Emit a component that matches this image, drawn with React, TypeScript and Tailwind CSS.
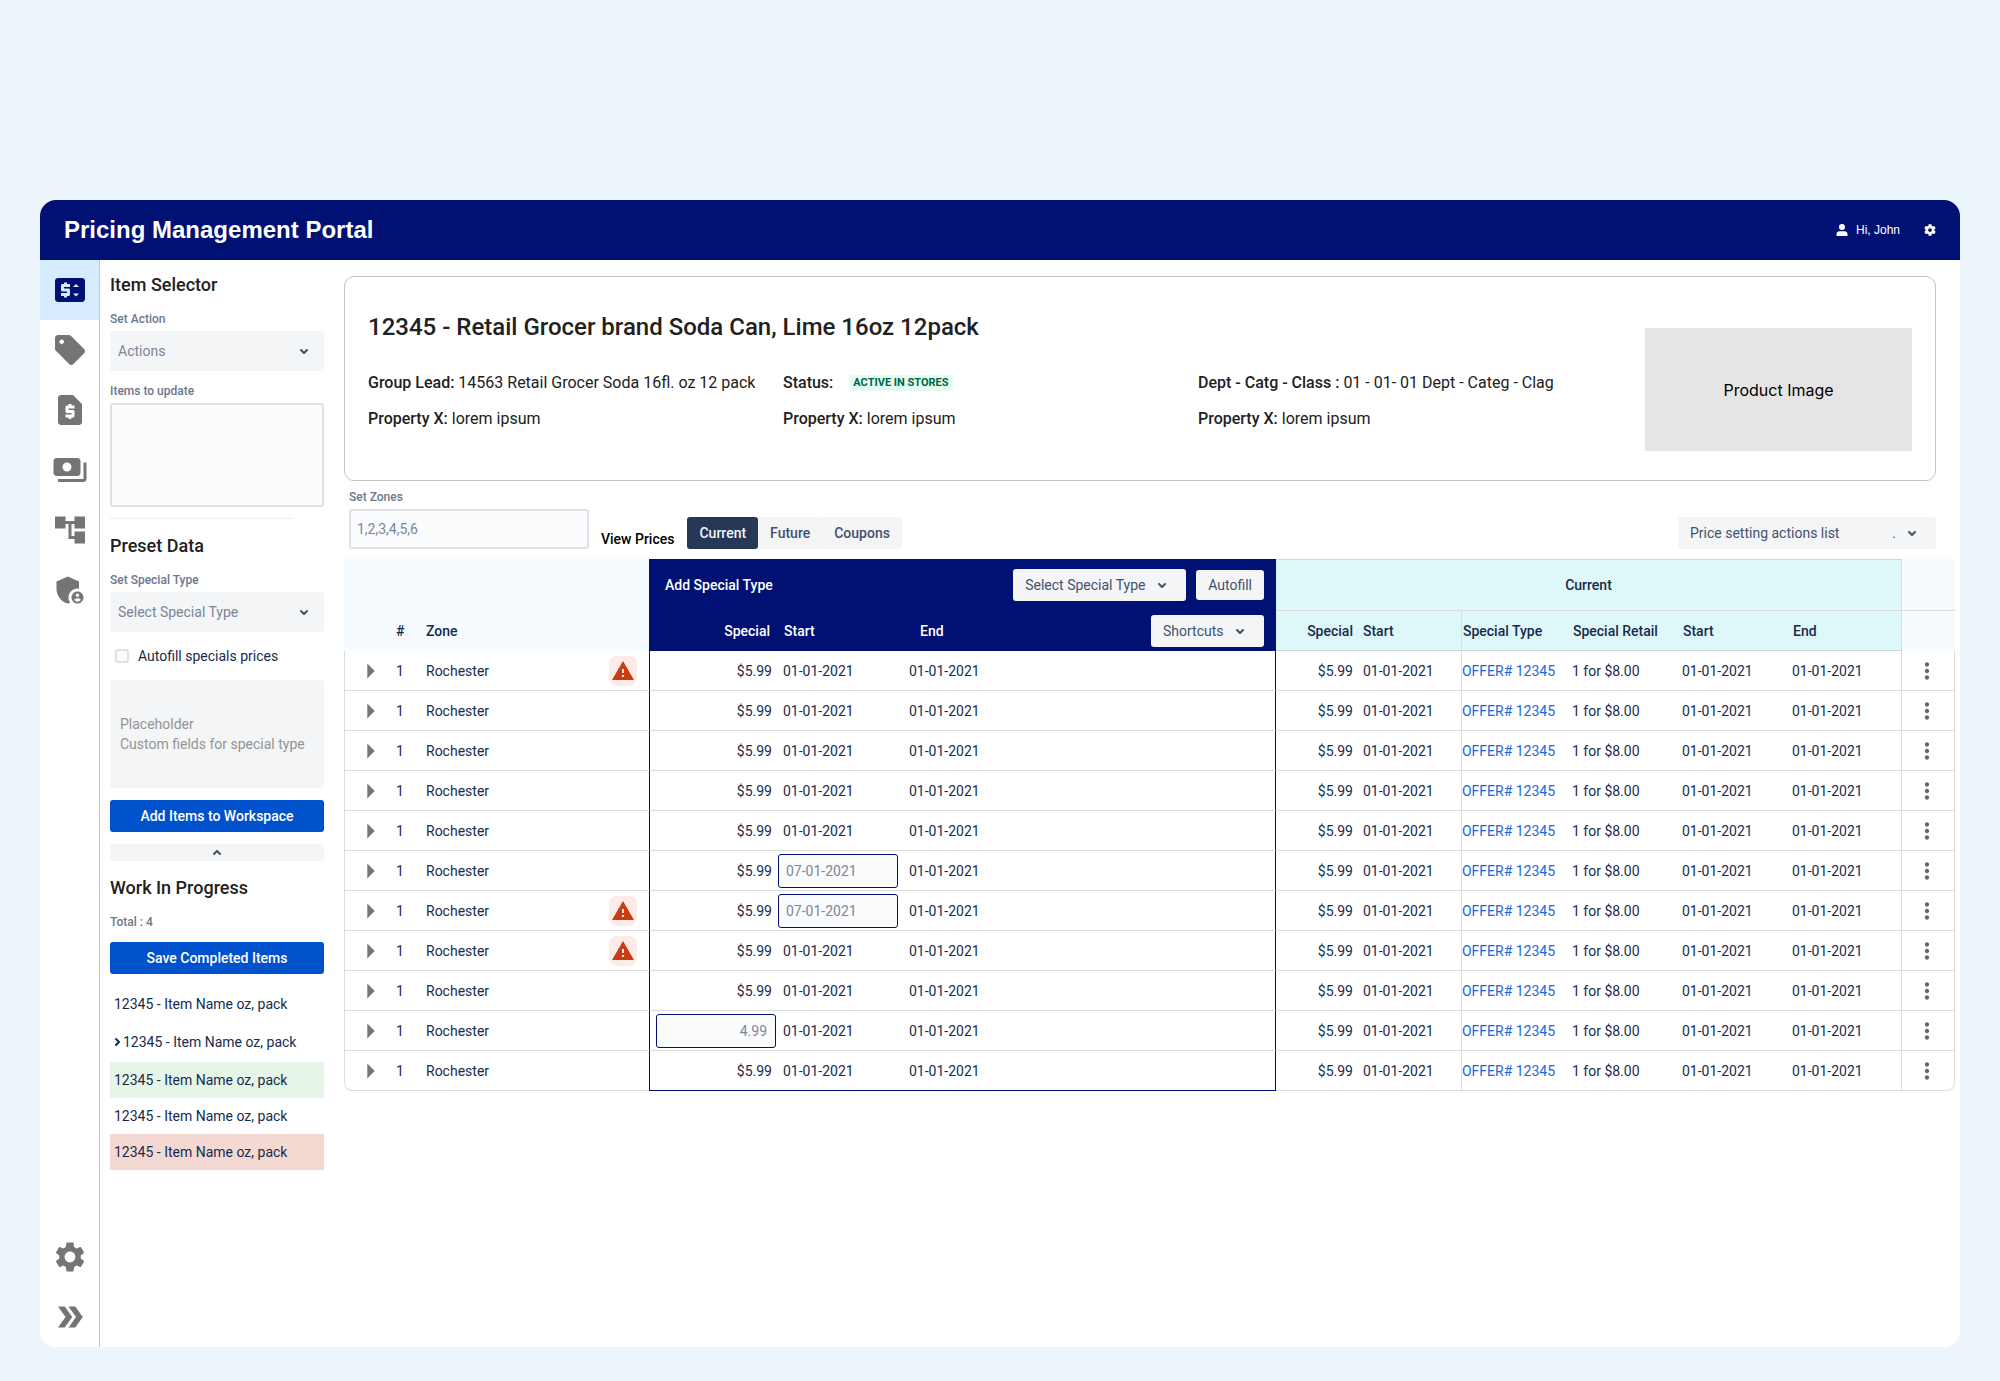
import type { ReactNode } from "react";
import clsx from "clsx";
import {
  MdAccountTree,
  MdAdminPanelSettings,
  MdDoubleArrow,
  MdMoreVert,
  MdPayments,
  MdPriceChange,
  MdRequestPage,
  MdSell,
  MdSettings,
  MdWarning,
} from "react-icons/md";
import { FaCog } from "react-icons/fa";

type Row = {
  zone: string;
  alert?: boolean;
  specialDraft?: string;
  startDraft?: string;
};

const rows: Row[] = [
  { zone: "Rochester", alert: true },
  { zone: "Rochester" },
  { zone: "Rochester" },
  { zone: "Rochester" },
  { zone: "Rochester" },
  { zone: "Rochester", startDraft: "07-01-2021" },
  { zone: "Rochester", alert: true, startDraft: "07-01-2021" },
  { zone: "Rochester", alert: true },
  { zone: "Rochester" },
  { zone: "Rochester", specialDraft: "4.99" },
  { zone: "Rochester" },
];

const navItems = [
  { label: "Prices", icon: MdPriceChange, active: true },
  { label: "Offers", icon: MdSell },
  { label: "Requests", icon: MdRequestPage },
  { label: "Payments", icon: MdPayments },
  { label: "Hierarchy", icon: MdAccountTree },
  { label: "Admin", icon: MdAdminPanelSettings },
];

const workItems = [
  { id: 1, className: "h-9" },
  { id: 2, className: "h-10", current: true },
  { id: 3, className: "h-9 bg-[#e6f5e6]" },
  { id: 4, className: "h-9" },
  { id: 5, className: "h-9 bg-[#f4d8d2]" },
];

function Chevron({ className }: { className?: string }) {
  return (
    <svg
      viewBox="0 0 24 24"
      className={clsx("h-6 w-6 shrink-0", className)}
      fill="currentColor"
      aria-hidden="true"
    >
      <path d="M8.292 10.293a1.009 1.009 0 000 1.419l2.939 2.965c.218.215.5.322.779.322s.556-.107.769-.322l2.93-2.955a1.01 1.01 0 000-1.419.987.987 0 00-1.406 0l-2.298 2.317-2.307-2.327a.99.99 0 00-1.406 0z" />
    </svg>
  );
}

function SelectBox({
  id,
  text,
  label,
  className,
  selectClassName,
  iconClassName,
  mark,
}: {
  id: string;
  text: string;
  label?: string;
  className?: string;
  selectClassName: string;
  iconClassName: string;
  mark?: string;
}) {
  return (
    <div className={clsx("relative", className)}>
      <select
        id={id}
        aria-label={label}
        className={clsx(
          "w-full appearance-none rounded-[3px] bg-[#f4f5f7] text-sm",
          selectClassName,
        )}
      >
        <option>{text}</option>
      </select>
      <span
        className={clsx(
          "pointer-events-none absolute inset-y-0 flex items-center gap-1 text-sm text-[#42526e]",
          iconClassName,
        )}
      >
        {mark}
        <Chevron />
      </span>
    </div>
  );
}

function FieldLabel({ htmlFor, children }: { htmlFor: string; children: ReactNode }) {
  return (
    <label
      htmlFor={htmlFor}
      className="mb-1 block text-xs font-medium text-[#6b778c]"
    >
      {children}
    </label>
  );
}

function Property({ name, children }: { name: string; children: ReactNode }) {
  return (
    <p className="whitespace-nowrap">
      <span className="font-medium">{name}</span> {children}
    </p>
  );
}

function Header() {
  return (
    <header className="flex h-15 items-center bg-[#001173] pr-6 pl-6 font-['Liberation_Sans',Arial,sans-serif] text-white">
      <h1 className="flex-1 text-2xl font-bold">Pricing Management Portal</h1>
      <a href="#account" className="mr-6 flex items-center gap-2 text-xs">
        <svg viewBox="0 0 12 12" className="h-3 w-3" fill="currentColor" aria-hidden="true">
          <circle cx="6" cy="3" r="3" />
          <path d="M.5 12v-1.5a3.2 3.2 0 0 1 3.2-3.2h4.6a3.2 3.2 0 0 1 3.2 3.2V12z" />
        </svg>
        Hi, John
      </a>
      <button type="button" aria-label="Settings">
        <FaCog className="h-3 w-3" />
      </button>
    </header>
  );
}

function NavRail() {
  return (
    <nav className="flex w-15 shrink-0 flex-col border-r border-[#c4c4c4] text-[#757575]">
      {navItems.map(({ label, icon: Icon, active }) => (
        <a
          key={label}
          href={`#${label.toLowerCase()}`}
          aria-label={label}
          className={clsx(
            "flex h-15 items-center justify-center",
            active && "bg-[#d8ecff] text-[#001173]",
          )}
        >
          <Icon className="h-9 w-9" />
        </a>
      ))}
      <a
        href="#settings"
        aria-label="Settings"
        className="mt-auto flex h-15 items-center justify-center"
      >
        <MdSettings className="h-9 w-9" />
      </a>
      <button
        type="button"
        aria-label="Expand menu"
        className="flex h-15 items-center justify-center"
      >
        <MdDoubleArrow className="h-9 w-9" />
      </button>
    </nav>
  );
}

function Sidebar() {
  return (
    <aside className="w-[214px] shrink-0 pt-[13px]">
      <h2 className="mb-[14px] text-lg leading-6 font-medium text-[#212121]">
        Item Selector
      </h2>
      <FieldLabel htmlFor="action">Set Action</FieldLabel>
      <SelectBox
        id="action"
        text="Actions"
        className="mb-3"
        selectClassName="h-10 px-2 text-[#7a869a]"
        iconClassName="right-2"
      />
      <FieldLabel htmlFor="items">Items to update</FieldLabel>
      <textarea
        id="items"
        className="block h-26 w-full resize-none rounded-[3px] border-2 border-[#dfe1e6] bg-[#fafbfc] p-2 text-sm"
      />
      <hr className="mt-[11px] w-[183px] border-[#ebecf0]" />

      <h2 className="mt-[15px] mb-[14px] text-lg leading-6 font-medium text-[#212121]">
        Preset Data
      </h2>
      <FieldLabel htmlFor="preset-type">Set Special Type</FieldLabel>
      <SelectBox
        id="preset-type"
        text="Select Special Type"
        selectClassName="h-10 px-2 text-[#7a869a]"
        iconClassName="right-2"
      />
      <label className="my-[14px] flex items-center gap-[9px] pl-[5px] text-sm text-[#172b4d]">
        <input
          type="checkbox"
          className="h-[14px] w-[14px] appearance-none rounded-[3px] border-2 border-[#dfe1e6] bg-[#fafbfc]"
        />
        Autofill specials prices
      </label>
      <div className="flex h-27 flex-col justify-center rounded-[3px] bg-[#f4f5f7] px-[10px] text-sm text-[#949494]">
        <p>Placeholder</p>
        <p>Custom fields for special type</p>
      </div>
      <button
        type="button"
        className="mt-3 h-8 w-full rounded-[3px] bg-[#0052cc] text-sm font-medium text-white"
      >
        Add Items to Workspace
      </button>
      <button
        type="button"
        aria-label="Collapse"
        className="mt-3 flex h-[17px] w-full items-center justify-center rounded-[3px] bg-[#f4f5f7] text-[#42526e]"
      >
        <Chevron className="rotate-180" />
      </button>

      <h2 className="mt-[15px] mb-[14px] text-lg leading-6 font-medium text-[#212121]">
        Work In Progress
      </h2>
      <p className="text-xs font-medium text-[#6b778c]">Total : 4</p>
      <button
        type="button"
        className="mt-3 h-8 w-full rounded-[3px] bg-[#0052cc] text-sm font-medium text-white"
      >
        Save Completed Items
      </button>
      <ul className="mt-3 text-sm text-[#172b4d]">
        {workItems.map((item) => (
          <li
            key={item.id}
            className={clsx("flex items-center pl-1", item.className)}
          >
            {item.current && (
              <span className="flex w-[9px] shrink-0 items-center justify-center pr-1">
                <Chevron className="-rotate-90" />
              </span>
            )}
            12345 - Item Name oz, pack
          </li>
        ))}
      </ul>
    </aside>
  );
}

function ItemCard() {
  return (
    <section className="mr-6 flex justify-between rounded-[10px] border border-[#c4c4c4] px-[23px] text-[#212121]">
      <div className="pt-[34px] pb-[49px]">
        <h2 className="text-2xl leading-8 font-medium">
          12345 - Retail Grocer brand Soda Can, Lime 16oz 12pack
        </h2>
        <div className="mt-7 grid grid-cols-[415px_415px_auto] gap-y-3">
          <Property name="Group Lead:">
            14563 Retail Grocer Soda 16fl. oz 12 pack
          </Property>
          <div className="flex items-center gap-4">
            <span className="font-medium">Status:</span>
            <span className="rounded-[3px] bg-[#e3fcef] px-1 text-[11px] leading-4 font-bold text-[#006644]">
              ACTIVE IN STORES
            </span>
          </div>
          <Property name="Dept - Catg - Class :">
            01 - 01- 01 Dept - Categ - Clag
          </Property>
          <Property name="Property X:">lorem ipsum</Property>
          <Property name="Property X:">lorem ipsum</Property>
          <Property name="Property X:">lorem ipsum</Property>
        </div>
      </div>
      <div className="mt-[51px] flex h-[123px] w-[267px] items-center justify-center bg-[#e5e5e5] font-['Inter',sans-serif] text-black">
        Product Image
      </div>
    </section>
  );
}

function Toolbar() {
  return (
    <div className="mt-2 mr-6 mb-[10px] flex items-end pl-[5px]">
      <div className="w-60">
        <FieldLabel htmlFor="zones">Set Zones</FieldLabel>
        <input
          id="zones"
          type="text"
          placeholder="1,2,3,4,5,6"
          className="block h-10 w-full rounded-[3px] border-2 border-[#dfe1e6] bg-[#fafbfc] px-[6px] text-sm placeholder:text-[#7a869a]"
        />
      </div>
      <span className="ml-3 text-sm font-medium text-black">View Prices</span>
      <div className="ml-[13px] flex text-sm font-medium">
        <button type="button" className="h-8 rounded-[3px] bg-[#253858] px-3 text-[#f4f5f7]">
          Current
        </button>
        <button type="button" className="h-8 rounded-[3px] bg-[#f4f5f7] px-3 text-[#42526e]">
          Future
        </button>
        <button type="button" className="h-8 rounded-[3px] bg-[#f4f5f7] px-3 text-[#42526e]">
          Coupons
        </button>
      </div>
      <SelectBox
        id="price-actions"
        label="Price setting actions"
        text="Price setting actions list"
        className="ml-auto w-[258px]"
        selectClassName="h-8 px-3 text-[#42526e]"
        iconClassName="right-3"
        mark="."
      />
    </div>
  );
}

function PriceRow({ row, last }: { row: Row; last: boolean }) {
  const line = "border-b border-[#dcdcdc]";
  const navyLine = last
    ? "border-b border-b-[#001173]"
    : "border-b border-b-[#dcdcdc]";

  return (
    <tr className="h-10">
      <td className={clsx(line, "border-l", last && "rounded-bl-lg")}>
        <button type="button" aria-label="Expand zone" className="ml-[22px] block">
          <svg viewBox="0 0 8 16" className="h-4 w-2" fill="#757575" aria-hidden="true">
            <path d="M.3 .5l7.4 7.5-7.4 7.5z" />
          </svg>
        </button>
      </td>
      <td className={clsx(line, "pl-2")}>1</td>
      <td className={clsx(line, "pl-2")}>{row.zone}</td>
      <td className={clsx(line, "pl-2")}>
        {row.alert && (
          <span className="flex h-[30px] w-7 items-center justify-center rounded-lg bg-[#ffebe6]">
            <MdWarning className="h-6 w-6 text-[#ca3c16]" />
          </span>
        )}
      </td>
      <td
        className={clsx(
          navyLine,
          "border-l border-l-[#001173] text-right",
          row.specialDraft ? "pr-px" : "pr-[5px]",
        )}
      >
        {row.specialDraft ? (
          <input
            type="text"
            aria-label="Special price"
            placeholder={row.specialDraft}
            className="ml-auto block h-[34px] w-30 rounded-[3px] border border-[#001173] bg-[#fafbfc] px-2 text-right placeholder:text-[#7a869a]"
          />
        ) : (
          "$5.99"
        )}
      </td>
      <td className={clsx(navyLine, row.startDraft ? "pl-px" : "pl-[6px]")}>
        {row.startDraft ? (
          <input
            type="text"
            aria-label="Start date"
            placeholder={row.startDraft}
            className="block h-[34px] w-30 rounded-[3px] border border-[#001173] bg-[#fafbfc] px-[7px] placeholder:text-[#7a869a]"
          />
        ) : (
          "01-01-2021"
        )}
      </td>
      <td className={clsx(navyLine, "pl-2")}>01-01-2021</td>
      <td className={clsx(navyLine, "border-r border-r-[#001173]")} />
      <td className={clsx(line, "pr-[5px] text-right")}>$5.99</td>
      <td className={clsx(line, "border-r pl-[5px]")}>01-01-2021</td>
      <td className={line}>
        <a href="#offer" className="whitespace-nowrap text-[#1a66e0]">
          OFFER# 12345
        </a>
      </td>
      <td className={clsx(line, "pl-[6px]")}>1 for $8.00</td>
      <td className={clsx(line, "pl-2")}>01-01-2021</td>
      <td className={clsx(line, "border-r pl-2")}>01-01-2021</td>
      <td className={clsx(line, "border-r pr-[3px]", last && "rounded-br-lg")}>
        <button type="button" aria-label="Row actions" className="mx-auto block">
          <MdMoreVert className="h-[26px] w-[26px] text-[#666666]" />
        </button>
      </td>
    </tr>
  );
}

function PriceTable() {
  return (
    <div className="mr-[5px]">
      <table className="w-full table-fixed border-separate border-spacing-0 text-left text-sm text-[#172b4d]">
        <colgroup>
          <col className="w-11" />
          <col className="w-[30px]" />
          <col className="w-[183px]" />
          <col className="w-12" />
          <col className="w-32" />
          <col className="w-31" />
          <col className="w-25" />
          <col />
          <col className="w-[82px]" />
          <col className="w-[104px]" />
          <col className="w-26" />
          <col className="w-[108px]" />
          <col className="w-[110px]" />
          <col className="w-[118px]" />
          <col className="w-[53px]" />
        </colgroup>
        <thead>
          <tr className="h-13">
            <td colSpan={4} className="bg-[#f6fbff]" />
            <th colSpan={4} scope="colgroup" className="bg-[#001173] pr-3 pl-4 font-medium text-white">
              <div className="flex items-center">
                <span className="flex-1">Add Special Type</span>
                <SelectBox
                  id="special-type"
                  label="Special type"
                  text="Select Special Type"
                  className="mr-[10px] w-[173px]"
                  selectClassName="h-8 px-3 text-[#42526e] font-normal"
                  iconClassName="right-3"
                />
                <button
                  type="button"
                  className="h-[30px] rounded-[3px] bg-[#f4f5f7] px-3 font-normal text-[#42526e]"
                >
                  Autofill
                </button>
              </div>
            </th>
            <th
              colSpan={6}
              scope="colgroup"
              className="border-t border-r border-b border-[#dcdcdc] border-t-[#c5dcdf] bg-[#def7f8] text-center font-medium"
            >
              Current
            </th>
            <td className="border-b border-[#dcdcdc] bg-[#f6fbff]" />
          </tr>
          <tr className="h-10 *:font-medium">
            <td className="bg-[#f6fbff]" />
            <th scope="col" className="bg-[#f6fbff] pl-2">#</th>
            <th scope="col" className="bg-[#f6fbff] pl-2">Zone</th>
            <td className="bg-[#f6fbff]" />
            <th scope="col" className="bg-[#001173] pr-[7px] text-right text-white">Special</th>
            <th scope="col" className="bg-[#001173] pl-[7px] text-white">Start</th>
            <th scope="col" className="bg-[#001173] pl-[19px] text-white">End</th>
            <td className="bg-[#001173] pr-3">
              <SelectBox
                id="shortcuts"
                label="Shortcuts"
                text="Shortcuts"
                className="ml-auto w-[113px]"
                selectClassName="h-8 px-3 text-[#42526e] font-normal"
                iconClassName="right-3"
              />
            </td>
            <th scope="col" className="border-b border-[#bfdcdc] bg-[#def7f8] pr-[5px] text-right">
              Special
            </th>
            <th scope="col" className="border-r border-b border-[#bfdcdc] border-r-[#dcdcdc] bg-[#def7f8] pl-[5px]">
              Start
            </th>
            <th scope="col" className="border-b border-[#bfdcdc] bg-[#def7f8] pl-px">
              Special Type
            </th>
            <th scope="col" className="border-b border-[#bfdcdc] bg-[#def7f8] pl-[7px]">
              Special Retail
            </th>
            <th scope="col" className="border-b border-[#bfdcdc] bg-[#def7f8] pl-[9px]">
              Start
            </th>
            <th scope="col" className="border-r border-b border-[#bfdcdc] border-r-[#dcdcdc] bg-[#def7f8] pl-[9px]">
              End
            </th>
            <td className="bg-[#f6fbff]" />
          </tr>
        </thead>
        <tbody>
          {rows.map((row, i) => (
            <PriceRow key={i} row={row} last={i === rows.length - 1} />
          ))}
        </tbody>
      </table>
    </div>
  );
}

export default function App() {
  return (
    <div className="flex min-h-screen flex-col bg-[#ecf4fc] px-10 pt-50 pb-[34px] font-['Roboto',sans-serif]">
      <div className="flex flex-1 flex-col overflow-hidden rounded-2xl bg-white">
        <Header />
        <div className="flex flex-1">
          <NavRail />
          <div className="flex min-w-0 flex-1 gap-5 pl-[10px]">
            <Sidebar />
            <main className="min-w-0 flex-1 pt-4">
              <ItemCard />
              <Toolbar />
              <PriceTable />
            </main>
          </div>
        </div>
      </div>
    </div>
  );
}
